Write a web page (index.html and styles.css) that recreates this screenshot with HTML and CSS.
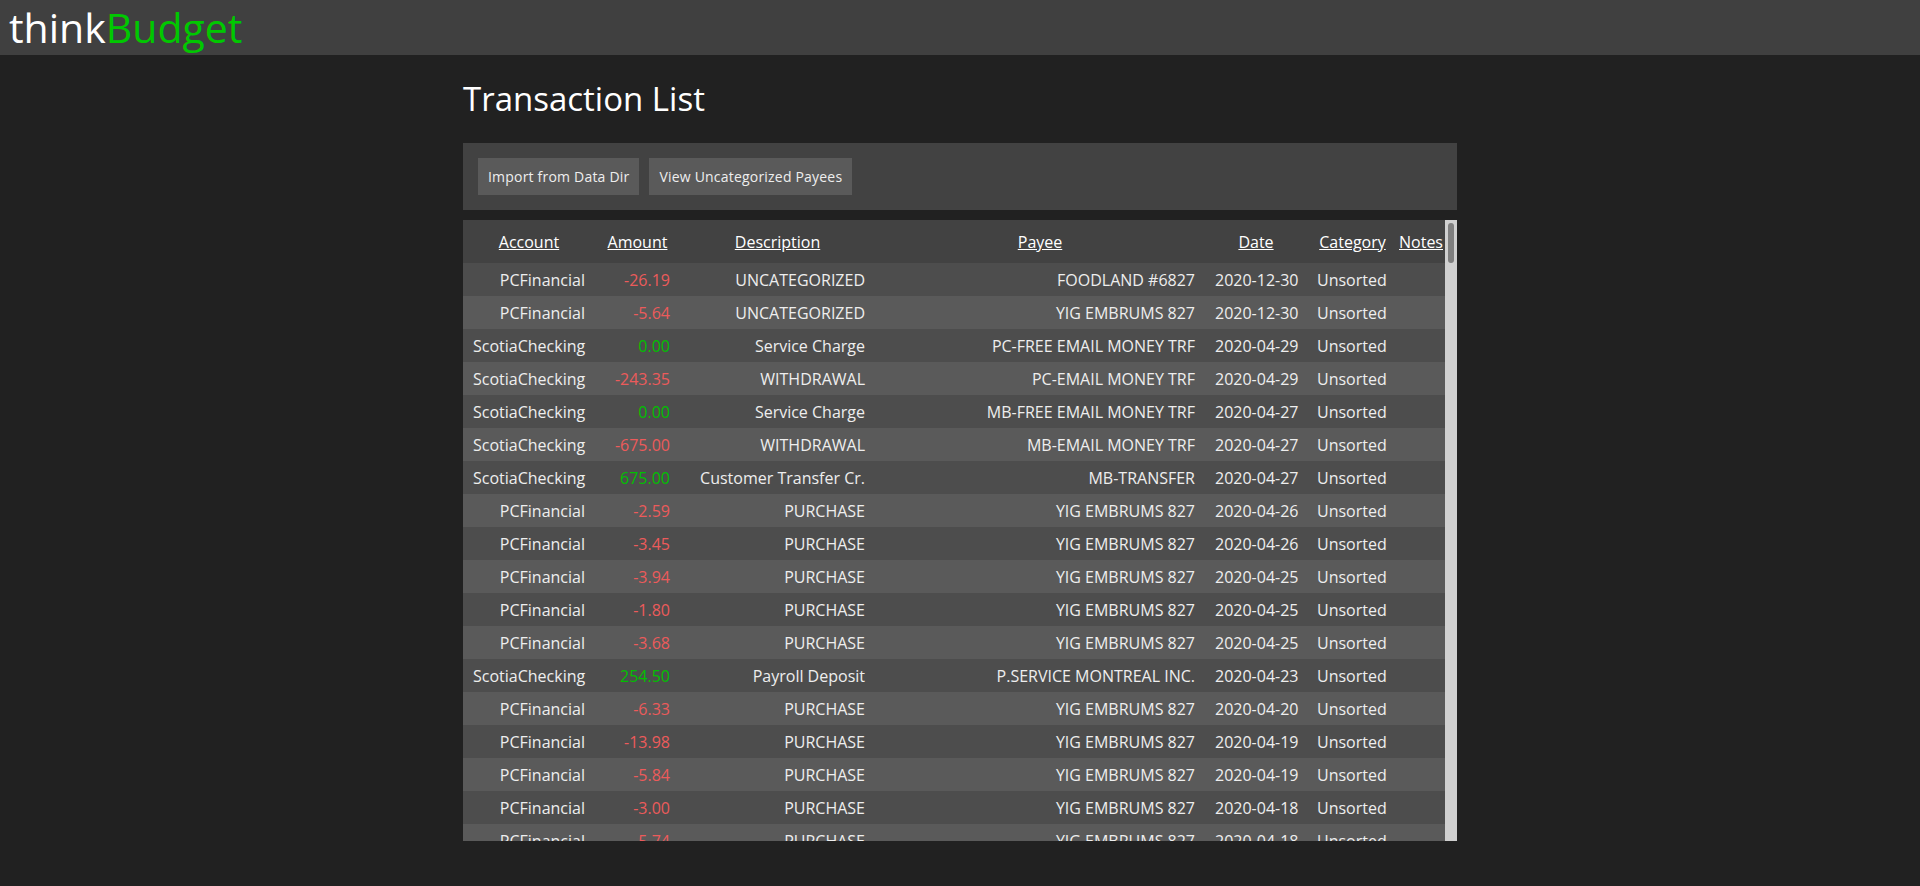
FILE: index.html
```html
<!DOCTYPE html>
<html lang="en">
<head>
<meta charset="utf-8">
<title>thinkBudget - Transaction List</title>
<link rel="stylesheet" href="styles.css">
</head>
<body>
<header class="topbar">
  <span class="logo">think<span class="logo-green">Budget</span></span>
</header>
<main class="page">
  <h1 class="title">Transaction List</h1>
  <div class="toolbar">
    <button class="btn">Import from Data Dir</button>
    <button class="btn">View Uncategorized Payees</button>
  </div>
  <div class="table-wrap">
    <div class="table-scroll">
      <table class="tx">
        <colgroup>
          <col class="c-account"><col class="c-amount"><col class="c-desc"><col class="c-payee"><col class="c-date"><col class="c-cat"><col class="c-notes">
        </colgroup>
        <thead>
          <tr><th><a>Account</a></th><th><a>Amount</a></th><th><a>Description</a></th><th><a>Payee</a></th><th><a>Date</a></th><th><a>Category</a></th><th class="notes"><a>Notes</a></th></tr>
        </thead>
        <tbody>
          <tr><td>PCFinancial</td><td class="neg">-26.19</td><td>UNCATEGORIZED</td><td>FOODLAND #6827</td><td>2020-12-30</td><td class="cat">Unsorted</td><td></td></tr>
          <tr><td>PCFinancial</td><td class="neg">-5.64</td><td>UNCATEGORIZED</td><td>YIG EMBRUMS 827</td><td>2020-12-30</td><td class="cat">Unsorted</td><td></td></tr>
          <tr><td>ScotiaChecking</td><td class="pos">0.00</td><td>Service Charge</td><td>PC-FREE EMAIL MONEY TRF</td><td>2020-04-29</td><td class="cat">Unsorted</td><td></td></tr>
          <tr><td>ScotiaChecking</td><td class="neg">-243.35</td><td>WITHDRAWAL</td><td>PC-EMAIL MONEY TRF</td><td>2020-04-29</td><td class="cat">Unsorted</td><td></td></tr>
          <tr><td>ScotiaChecking</td><td class="pos">0.00</td><td>Service Charge</td><td>MB-FREE EMAIL MONEY TRF</td><td>2020-04-27</td><td class="cat">Unsorted</td><td></td></tr>
          <tr><td>ScotiaChecking</td><td class="neg">-675.00</td><td>WITHDRAWAL</td><td>MB-EMAIL MONEY TRF</td><td>2020-04-27</td><td class="cat">Unsorted</td><td></td></tr>
          <tr><td>ScotiaChecking</td><td class="pos">675.00</td><td>Customer Transfer Cr.</td><td>MB-TRANSFER</td><td>2020-04-27</td><td class="cat">Unsorted</td><td></td></tr>
          <tr><td>PCFinancial</td><td class="neg">-2.59</td><td>PURCHASE</td><td>YIG EMBRUMS 827</td><td>2020-04-26</td><td class="cat">Unsorted</td><td></td></tr>
          <tr><td>PCFinancial</td><td class="neg">-3.45</td><td>PURCHASE</td><td>YIG EMBRUMS 827</td><td>2020-04-26</td><td class="cat">Unsorted</td><td></td></tr>
          <tr><td>PCFinancial</td><td class="neg">-3.94</td><td>PURCHASE</td><td>YIG EMBRUMS 827</td><td>2020-04-25</td><td class="cat">Unsorted</td><td></td></tr>
          <tr><td>PCFinancial</td><td class="neg">-1.80</td><td>PURCHASE</td><td>YIG EMBRUMS 827</td><td>2020-04-25</td><td class="cat">Unsorted</td><td></td></tr>
          <tr><td>PCFinancial</td><td class="neg">-3.68</td><td>PURCHASE</td><td>YIG EMBRUMS 827</td><td>2020-04-25</td><td class="cat">Unsorted</td><td></td></tr>
          <tr><td>ScotiaChecking</td><td class="pos">254.50</td><td>Payroll Deposit</td><td>P.SERVICE MONTREAL INC.</td><td>2020-04-23</td><td class="cat">Unsorted</td><td></td></tr>
          <tr><td>PCFinancial</td><td class="neg">-6.33</td><td>PURCHASE</td><td>YIG EMBRUMS 827</td><td>2020-04-20</td><td class="cat">Unsorted</td><td></td></tr>
          <tr><td>PCFinancial</td><td class="neg">-13.98</td><td>PURCHASE</td><td>YIG EMBRUMS 827</td><td>2020-04-19</td><td class="cat">Unsorted</td><td></td></tr>
          <tr><td>PCFinancial</td><td class="neg">-5.84</td><td>PURCHASE</td><td>YIG EMBRUMS 827</td><td>2020-04-19</td><td class="cat">Unsorted</td><td></td></tr>
          <tr><td>PCFinancial</td><td class="neg">-3.00</td><td>PURCHASE</td><td>YIG EMBRUMS 827</td><td>2020-04-18</td><td class="cat">Unsorted</td><td></td></tr>
          <tr><td>PCFinancial</td><td class="neg">-5.74</td><td>PURCHASE</td><td>YIG EMBRUMS 827</td><td>2020-04-18</td><td class="cat">Unsorted</td><td></td></tr>
        </tbody>
      </table>
    </div>
    <div class="scrollbar" aria-hidden="true"><div class="scroll-thumb"></div></div>
  </div>
</main>
</body>
</html>
```
FILE: styles.css
```css
html, body {
  margin: 0;
  padding: 0;
}
body {
  background: #212121;
  color: #eeeeee;
  font-family: "Open Sans", "Noto Sans", sans-serif;
}
.topbar {
  height: 55px;
  background: #404040;
  display: flex;
  align-items: center;
  padding-left: 9px;
}
.logo {
  font-size: 41px;
  line-height: 1;
  color: #ffffff;
}
.logo-green {
  color: #00c800;
}
.page {
  width: 994px;
  margin: 0 auto;
}
.title {
  margin: 0;
  padding: 21px 0 21px;
  font-size: 33px;
  font-weight: 400;
  line-height: 46px;
  color: #ffffff;
}
.toolbar {
  background: #424242;
  padding: 15px;
  display: flex;
  gap: 10px;
}
.btn {
  background: #5a5a5a;
  color: #eeeeee;
  border: 0;
  height: 37px;
  padding: 0 10px;
  font-family: "Open Sans", "Noto Sans", sans-serif;
  font-size: 14px;
  letter-spacing: 0.2px;
}
.table-wrap {
  position: relative;
  margin-top: 10px;
  height: 621px;
  background: #424242;
}
.table-scroll {
  height: 100%;
  width: 982px;
  overflow: hidden;
}
.scrollbar {
  position: absolute;
  top: 0;
  right: 0;
  width: 12px;
  height: 100%;
  background: #d0d0d0;
}
.scroll-thumb {
  position: absolute;
  top: 3px;
  left: 3px;
  width: 6px;
  height: 40px;
  border-radius: 3px;
  background: #7f7f7f;
}
.tx {
  border-collapse: collapse;
  table-layout: fixed;
  width: 982px;
  font-size: 16px;
}
.c-account { width: 132px; }
.c-amount { width: 85px; }
.c-desc { width: 195px; }
.c-payee { width: 330px; }
.c-date { width: 102px; }
.c-cat { width: 91px; }
.c-notes { width: 47px; }
.tx th {
  height: 43px;
  padding: 0 10px;
  font-weight: 400;
  text-align: center;
  color: #ffffff;
  background: #424242;
  white-space: nowrap;
}
.tx th a {
  text-decoration: underline;
  cursor: pointer;
}
.tx th.notes {
  padding: 0 1px;
  text-align: left;
}
.tx td {
  height: 33px;
  padding: 0 10px;
  text-align: right;
  white-space: nowrap;
  overflow: hidden;
}
.tx td.cat {
  text-align: left;
}
.tx tbody tr:nth-child(odd) {
  background: #4d4d4d;
}
.tx tbody tr:nth-child(even) {
  background: #5a5a5a;
}
.neg {
  color: #ec5b5b;
}
.pos {
  color: #00c000;
}
```
